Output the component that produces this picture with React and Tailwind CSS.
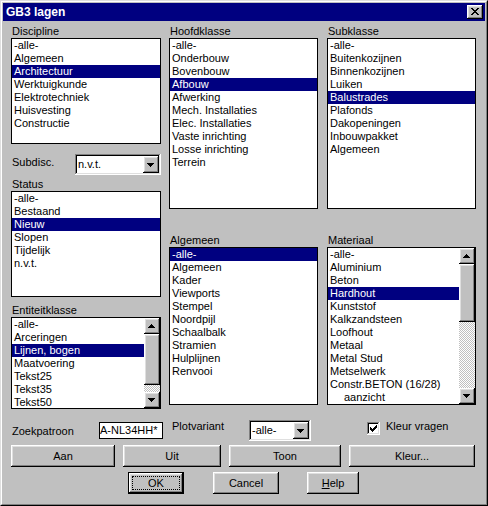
import React from "react";

// Win95 bevels
const raised =
  "bg-[#c0c0c0] shadow-[inset_-1px_-1px_#000,inset_1px_1px_#fff,inset_-2px_-2px_#808080,inset_2px_2px_#dfdfdf]";
const sunken =
  "bg-white shadow-[inset_-1px_-1px_#fff,inset_1px_1px_#808080,inset_-2px_-2px_#dfdfdf,inset_2px_2px_#000]";

const UP = "M7 6h1v1H7z M6 7h3v1H6z M5 8h5v1H5z M4 9h7v1H4z";
const DOWN = "M4 6h7v1H4z M5 7h5v1H5z M6 8h3v1H6z M7 9h1v1H7z";

function ArrowBtn({ down, className = "h-[16px]" }) {
  return (
    <div className={`${raised} w-[16px] shrink-0 flex items-center justify-center ${className}`}>
      <svg width="16" height="16" viewBox="0 0 16 16" shapeRendering="crispEdges">
        <path fill="#000" d={down ? DOWN : UP} />
      </svg>
    </div>
  );
}

function ScrollBar({ thumb, track }) {
  return (
    <div className="w-[16px] shrink-0 flex flex-col">
      <ArrowBtn />
      <div className={`${raised} ${thumb}`} />
      <div
        className={`${track} bg-[repeating-conic-gradient(#c0c0c0_0_25%,#fff_0_50%)] bg-[length:2px_2px]`}
      />
      <ArrowBtn down />
    </div>
  );
}

function ListBox({ items, selected, className, scroll }) {
  return (
    <div className={`border border-black bg-white flex overflow-hidden ${className}`}>
      <div className="flex-1 min-w-0">
        {items.map((it, i) => (
          <div
            key={i}
            className={`h-[13px] leading-[13px] pl-[2px] whitespace-nowrap ${
              i === selected ? "bg-[#000080] text-white" : "text-black"
            }`}
          >
            {it}
          </div>
        ))}
      </div>
      {scroll}
    </div>
  );
}

function Combo({ value, className }) {
  return (
    <div className={`${sunken} flex p-[2px] ${className}`}>
      <div className="flex-1 pl-[1px] flex items-center whitespace-nowrap">{value}</div>
      <ArrowBtn down className="h-full" />
    </div>
  );
}

function Label({ children, className = "" }) {
  return <div className={`h-[13px] leading-[13px] pl-[1px] ${className}`}>{children}</div>;
}

function Button({ children, className }) {
  return (
    <div className={`${raised} h-[22px] flex items-center justify-center leading-[13px] ${className}`}>
      {children}
    </div>
  );
}

export default function App() {
  return (
    <div className="w-[488px] h-[506px] bg-[#c0c0c0] border border-[#dfdfdf] border-r-black border-b-black font-['Liberation_Sans',Arial,sans-serif] text-[11px] text-black">
      <div className="h-full border border-white border-r-[#808080] border-b-[#808080] p-px flex flex-col">
        {/* titelbalk */}
        <div className="h-[18px] bg-[#000080] flex items-center justify-between pl-[3px] pr-[2px] shrink-0">
          <span className="text-white font-bold text-[12px] leading-[17px]">GB3 lagen</span>
          <div className={`${raised} w-[16px] h-[14px] flex items-start justify-start pl-[4px] pt-[3px]`}>
            <svg width="8" height="7" viewBox="0 0 8 7" shapeRendering="crispEdges">
              <path
                fill="#000"
                d="M0 0h2v1H0z M6 0h2v1H6z M1 1h2v1H1z M5 1h2v1H5z M2 2h4v1H2z M3 3h2v1H3z M2 4h4v1H2z M1 5h2v1H1z M5 5h2v1H5z M0 6h2v1H0z M6 6h2v1H6z"
              />
            </svg>
          </div>
        </div>

        <div className="px-[8px] flex flex-col">
          {/* drie kolommen */}
          <div className="flex">
            <div className="w-[150px] flex flex-col">
              <Label className="mt-[4px]">Discipline</Label>
              <ListBox
                className="h-[106px]"
                selected={2}
                items={["-alle-", "Algemeen", "Architectuur", "Werktuigkunde", "Elektrotechniek", "Huisvesting", "Constructie"]}
              />
              <div className="mt-[10px] h-[21px] flex">
                <div className="w-[64px] pl-[1px] pt-[2px] leading-[13px]">Subdisc.</div>
                <Combo value="n.v.t." className="w-[86px] h-[21px]" />
              </div>
              <Label className="mt-[3px]">Status</Label>
              <ListBox
                className="h-[106px]"
                selected={2}
                items={["-alle-", "Bestaand", "Nieuw", "Slopen", "Tijdelijk", "n.v.t."]}
              />
              <Label className="mt-[7px]">Entiteitklasse</Label>
              <ListBox
                className="h-[92px]"
                selected={2}
                items={["-alle-", "Arceringen", "Lijnen, bogen", "Maatvoering", "Tekst25", "Tekst35", "Tekst50"]}
                scroll={<ScrollBar thumb="h-[51px]" track="h-[7px]" />}
              />
            </div>

            <div className="w-[149px] ml-[8px] flex flex-col">
              <Label className="mt-[4px]">Hoofdklasse</Label>
              <ListBox
                className="h-[171px]"
                selected={3}
                items={[
                  "-alle-",
                  "Onderbouw",
                  "Bovenbouw",
                  "Afbouw",
                  "Afwerking",
                  "Mech. Installaties",
                  "Elec. Installaties",
                  "Vaste inrichting",
                  "Losse inrichting",
                  "Terrein",
                ]}
              />
              <Label className="mt-[25px]">Algemeen</Label>
              <ListBox
                className="h-[158px]"
                selected={0}
                items={[
                  "-alle-",
                  "Algemeen",
                  "Kader",
                  "Viewports",
                  "Stempel",
                  "Noordpijl",
                  "Schaalbalk",
                  "Stramien",
                  "Hulplijnen",
                  "Renvooi",
                ]}
              />
            </div>

            <div className="w-[149px] ml-[9px] flex flex-col">
              <Label className="mt-[4px]">Subklasse</Label>
              <ListBox
                className="h-[171px]"
                selected={4}
                items={[
                  "-alle-",
                  "Buitenkozijnen",
                  "Binnenkozijnen",
                  "Luiken",
                  "Balustrades",
                  "Plafonds",
                  "Dakopeningen",
                  "Inbouwpakket",
                  "Algemeen",
                ]}
              />
              <Label className="mt-[25px]">Materiaal</Label>
              <ListBox
                className="h-[158px]"
                selected={3}
                items={[
                  "-alle-",
                  "Aluminium",
                  "Beton",
                  "Hardhout",
                  "Kunststof",
                  "Kalkzandsteen",
                  "Loofhout",
                  "Metaal",
                  "Metal Stud",
                  "Metselwerk",
                  "Constr.BETON (16/28)",
                  <span className="pl-[14px]">aanzicht</span>,
                ]}
                scroll={<ScrollBar thumb="h-[58px]" track="h-[66px]" />}
              />
            </div>
          </div>

          {/* zoekpatroon / plotvariant / kleur vragen */}
          <div className="mt-[11px] h-[22px] flex items-start">
            <div className="w-[88px] pl-[1px] mt-[5px] leading-[13px]">Zoekpatroon</div>
            <div className="w-[64px] h-[17px] mt-[2px] border border-black bg-white leading-[15px] whitespace-nowrap overflow-hidden">
              A-NL34HH*
            </div>
            <div className="w-[77px] ml-[9px] leading-[13px]">Plotvariant</div>
            <Combo value="-alle-" className="w-[62px] h-[21px]" />
            <div className={`${sunken} ml-[56px] mt-[2px] w-[13px] h-[13px] flex items-center justify-center`}>
              <svg width="7" height="7" viewBox="0 0 7 7" shapeRendering="crispEdges">
                <path
                  fill="#000"
                  d="M6 0h1v1H6z M5 1h2v1H5z M0 2h1v1H0z M4 2h3v1H4z M0 3h2v1H0z M3 3h3v1H3z M0 4h5v1H0z M1 5h3v1H1z M2 6h1v1H2z"
                />
              </svg>
            </div>
            <div className="ml-[6px] leading-[13px]">Kleur vragen</div>
          </div>

          {/* knoppen */}
          <div className="mt-[3px] flex">
            <Button className="w-[104px]">Aan</Button>
            <Button className="w-[98px] ml-[8px]">Uit</Button>
            <Button className="w-[112px] ml-[8px]">Toon</Button>
            <Button className="w-[126px] ml-[8px]">Kleur...</Button>
          </div>

          <div className="mt-[5px] flex">
            <div className="ml-[117px] w-[56px] h-[22px] border border-black flex">
              <div className={`${raised} flex-1 relative flex items-center justify-center leading-[13px]`}>
                OK
                <div className="absolute inset-[3px] border border-dotted border-black" />
              </div>
            </div>
            <Button className="w-[66px] ml-[29px]">Cancel</Button>
            <Button className="w-[52px] ml-[28px]">
              <span>
                <u>H</u>elp
              </span>
            </Button>
          </div>
        </div>
      </div>
    </div>
  );
}
